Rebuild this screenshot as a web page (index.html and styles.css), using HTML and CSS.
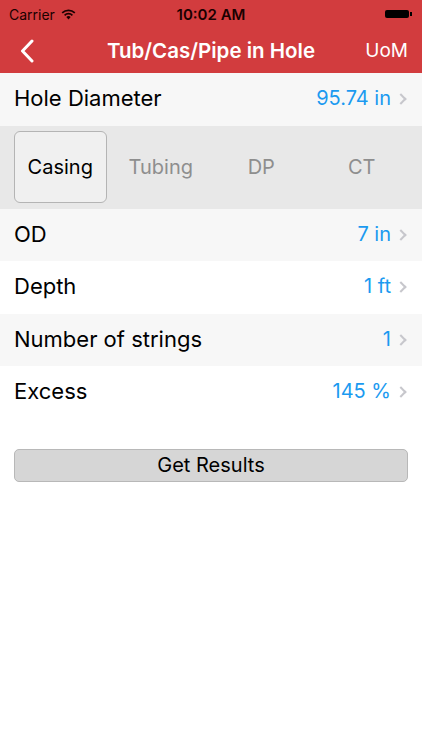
FILE: index.html
```html
<!DOCTYPE html>
<html lang="en">
<head>
    <meta charset="UTF-8">
    <meta name="viewport" content="width=device-width, initial-scale=1.0">
    <title>Tub/Cas/Pipe in Hole</title>
    <link rel="stylesheet" href="styles.css">
</head>
<body>
    <header class="topbar">
        <div class="status">
            <div class="status-left">
                <span>Carrier</span>
                <svg class="wifi" width="15" height="11" viewBox="0 0 15 11">
                    <path class="dot" d="M7.5 10.5 L5.3 8.1 A3.2 3.2 0 0 1 9.7 8.1 Z"/>
                    <path class="arc" d="M3.6 6.3 A5.6 5.6 0 0 1 11.4 6.3"/>
                    <path class="arc" d="M1.2 3.9 A9 9 0 0 1 13.8 3.9"/>
                </svg>
            </div>
            <div class="status-time">10:02 AM</div>
            <div class="status-right">
                <span class="battery"></span><span class="battery-tip"></span>
            </div>
        </div>
        <nav class="navbar">
            <a class="back" href="#">
                <svg width="14" height="24" viewBox="0 0 14 24">
                    <path d="M12 2 L2.5 12 L12 22" stroke="#fff" stroke-width="3" fill="none" stroke-linecap="round" stroke-linejoin="round"/>
                </svg>
            </a>
            <h1>Tub/Cas/Pipe in Hole</h1>
            <a class="uom" href="#">UoM</a>
        </nav>
    </header>

    <section class="list">
        <div class="row shade">
            <span class="label">Hole Diameter</span>
            <span class="value">95.74 in</span>
            <span class="chev"></span>
        </div>
    </section>

    <div class="segments">
        <div class="seg active">Casing</div>
        <div class="seg">Tubing</div>
        <div class="seg">DP</div>
        <div class="seg">CT</div>
    </div>

    <section class="list">
        <div class="row shade">
            <span class="label">OD</span>
            <span class="value">7 in</span>
            <span class="chev"></span>
        </div>
        <div class="row">
            <span class="label">Depth</span>
            <span class="value">1 ft</span>
            <span class="chev"></span>
        </div>
        <div class="row shade">
            <span class="label">Number of strings</span>
            <span class="value">1</span>
            <span class="chev"></span>
        </div>
        <div class="row">
            <span class="label">Excess</span>
            <span class="value">145 %</span>
            <span class="chev"></span>
        </div>
    </section>

    <div class="actions">
        <button type="button">Get Results</button>
    </div>
</body>
</html>
```

FILE: styles.css
```css
/* General Styles */
body {
    font-family: 'Inter', 'Liberation Sans', sans-serif;
    margin: 0;
    padding: 0;
    background-color: #fff;
    color: #000;
    width: 422px;
}

/* Top bar */
.topbar {
    background-color: #d23c3e;
    color: #fff;
}

.status {
    height: 28px;
    display: flex;
    align-items: center;
    justify-content: space-between;
    padding: 0 10px 0 9px;
    font-size: 14px;
    position: relative;
}

.status-left {
    display: flex;
    align-items: center;
    gap: 6px;
    color: #1a0000;
}

.wifi .dot {
    fill: #1a0000;
}

.wifi .arc {
    fill: none;
    stroke: #1a0000;
    stroke-width: 1.7;
}

.status-time {
    position: absolute;
    left: 0;
    right: 0;
    text-align: center;
    font-weight: 600;
    font-size: 15px;
    color: #1a0000;
}

.status-right {
    display: flex;
    align-items: center;
}

.battery {
    width: 24px;
    height: 8px;
    background-color: #000;
    border-radius: 2px;
}

.battery-tip {
    width: 2px;
    height: 4px;
    background-color: #000;
    margin-left: 1px;
}

.navbar {
    height: 45px;
    display: flex;
    align-items: center;
    justify-content: space-between;
    padding: 0 14px 0 20px;
    position: relative;
}

.navbar h1 {
    position: absolute;
    left: 0;
    right: 0;
    margin: 0;
    text-align: center;
    font-size: 20.5px;
    font-weight: 600;
    pointer-events: none;
}

.back {
    display: flex;
}

.uom {
    color: #fff;
    text-decoration: none;
    font-size: 19px;
}

/* Rows */
.row {
    height: 52.5px;
    box-sizing: border-box;
    display: flex;
    align-items: center;
    padding: 0 14px 2px;
    background-color: #fff;
}

.row.shade {
    background-color: #f7f7f7;
}

.label {
    flex: 1;
    font-size: 22px;
}

.value {
    color: #1b9af0;
    font-size: 20px;
}

.chev {
    width: 6px;
    height: 6px;
    border-top: 2px solid #c7c7cc;
    border-right: 2px solid #c7c7cc;
    transform: rotate(45deg);
    margin: 2px 3px 0 6px;
}

/* Segments */
.segments {
    display: flex;
    background-color: #e8e8e8;
    height: 83px;
    padding: 0 10px;
    align-items: center;
}

.seg {
    flex: 1;
    height: 70px;
    margin: 0 4px;
    display: flex;
    align-items: center;
    justify-content: center;
    font-size: 20px;
    color: #8e8e8e;
    border: 1px solid transparent;
    border-radius: 6px;
}

.seg.active {
    color: #000;
    background-color: #f0f0f0;
    border-color: #b4b4b4;
}

/* Button */
.actions {
    padding: 30px 14px;
}

.actions button {
    width: 100%;
    height: 33px;
    font-family: inherit;
    font-size: 20px;
    color: #000;
    background-color: #d6d6d6;
    border: 1px solid #b8b8b8;
    border-radius: 5px;
}
```
